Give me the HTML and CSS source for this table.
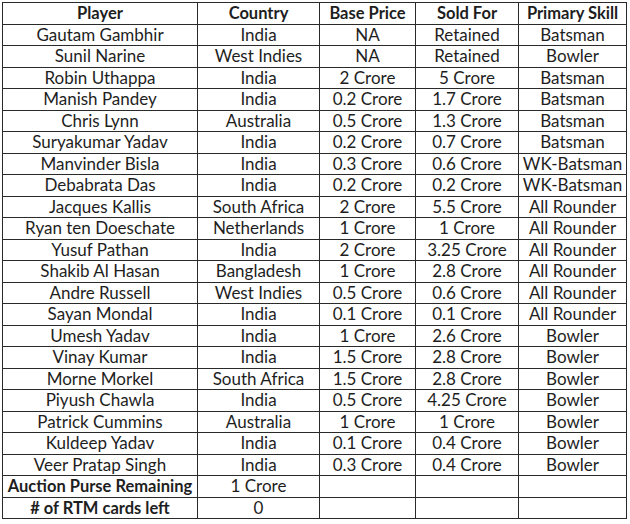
FILE: index.html
```html
<!DOCTYPE html>
<html>
<head>
<meta charset="utf-8">
<link rel="stylesheet" href="styles.css">
</head>
<body>
<table class="auction">
<colgroup>
<col class="c1"><col class="c2"><col class="c3"><col class="c4"><col class="c5">
</colgroup>
<thead>
<tr><th>Player</th><th>Country</th><th>Base Price</th><th>Sold For</th><th>Primary Skill</th></tr>
</thead>
<tbody>
<tr><td>Gautam Gambhir</td><td>India</td><td>NA</td><td>Retained</td><td>Batsman</td></tr>
<tr><td>Sunil Narine</td><td>West Indies</td><td>NA</td><td>Retained</td><td>Bowler</td></tr>
<tr><td>Robin Uthappa</td><td>India</td><td>2 Crore</td><td>5 Crore</td><td>Batsman</td></tr>
<tr><td>Manish Pandey</td><td>India</td><td>0.2 Crore</td><td>1.7 Crore</td><td>Batsman</td></tr>
<tr><td>Chris Lynn</td><td>Australia</td><td>0.5 Crore</td><td>1.3 Crore</td><td>Batsman</td></tr>
<tr><td>Suryakumar Yadav</td><td>India</td><td>0.2 Crore</td><td>0.7 Crore</td><td>Batsman</td></tr>
<tr><td>Manvinder Bisla</td><td>India</td><td>0.3 Crore</td><td>0.6 Crore</td><td>WK-Batsman</td></tr>
<tr><td>Debabrata Das</td><td>India</td><td>0.2 Crore</td><td>0.2 Crore</td><td>WK-Batsman</td></tr>
<tr><td>Jacques Kallis</td><td>South Africa</td><td>2 Crore</td><td>5.5 Crore</td><td>All Rounder</td></tr>
<tr><td>Ryan ten Doeschate</td><td>Netherlands</td><td>1 Crore</td><td>1 Crore</td><td>All Rounder</td></tr>
<tr><td>Yusuf Pathan</td><td>India</td><td>2 Crore</td><td>3.25 Crore</td><td>All Rounder</td></tr>
<tr><td>Shakib Al Hasan</td><td>Bangladesh</td><td>1 Crore</td><td>2.8 Crore</td><td>All Rounder</td></tr>
<tr><td>Andre Russell</td><td>West Indies</td><td>0.5 Crore</td><td>0.6 Crore</td><td>All Rounder</td></tr>
<tr><td>Sayan Mondal</td><td>India</td><td>0.1 Crore</td><td>0.1 Crore</td><td>All Rounder</td></tr>
<tr><td>Umesh Yadav</td><td>India</td><td>1 Crore</td><td>2.6 Crore</td><td>Bowler</td></tr>
<tr><td>Vinay Kumar</td><td>India</td><td>1.5 Crore</td><td>2.8 Crore</td><td>Bowler</td></tr>
<tr><td>Morne Morkel</td><td>South Africa</td><td>1.5 Crore</td><td>2.8 Crore</td><td>Bowler</td></tr>
<tr><td>Piyush Chawla</td><td>India</td><td>0.5 Crore</td><td>4.25 Crore</td><td>Bowler</td></tr>
<tr><td>Patrick Cummins</td><td>Australia</td><td>1 Crore</td><td>1 Crore</td><td>Bowler</td></tr>
<tr><td>Kuldeep Yadav</td><td>India</td><td>0.1 Crore</td><td>0.4 Crore</td><td>Bowler</td></tr>
<tr><td>Veer Pratap Singh</td><td>India</td><td>0.3 Crore</td><td>0.4 Crore</td><td>Bowler</td></tr>
<tr><th>Auction Purse Remaining</th><td>1 Crore</td><td></td><td></td><td></td></tr>
<tr><th># of RTM cards left</th><td>0</td><td></td><td></td><td></td></tr>
</tbody>
</table>
</body>
</html>
```
FILE: styles.css
```css
html, body {
  margin: 0;
  padding: 0;
  background: #ffffff;
}
body {
  padding: 2px 0 0 2px;
  font-family: "Lato", "Liberation Sans", sans-serif;
  color: #1e1e1e;
}
.auction {
  border-collapse: collapse;
  table-layout: fixed;
  width: 624px;
}
.c1 { width: 195px; }
.c2 { width: 122px; }
.c3 { width: 96px; }
.c4 { width: 103px; }
.c5 { width: 108px; }
.auction th,
.auction td {
  border: 1px solid #2a2a2a;
  height: 20.5px;
  padding: 0;
  text-align: center;
  vertical-align: middle;
  line-height: 18px;
  white-space: nowrap;
  overflow: hidden;
}
.auction th {
  font-size: 16.5px;
  font-weight: 700;
}
.auction td {
  font-size: 17px;
  font-weight: 400;
}
```
